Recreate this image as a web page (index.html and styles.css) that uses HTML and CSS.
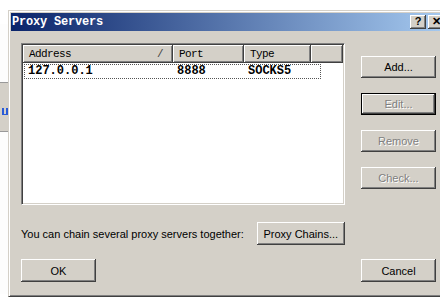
FILE: index.html
```html
<!DOCTYPE html>
<html>
<head>
<meta charset="UTF-8">
<title>Proxy Servers</title>
<link rel="stylesheet" href="styles.css">
</head>
<body>
<div class="behind">
  <div class="behind-bar"></div>
  <div class="behind-icon"></div>
</div>
<div class="dialog">
  <div class="titlebar">
    <span class="title">Proxy Servers</span>
    <span class="tbtn">?</span>
    <span class="tbtn">&#x2715;</span>
  </div>
  <div class="client">
    <div class="top">
      <div class="list">
        <div class="head">
          <span class="col c1">Address<i>/</i></span>
          <span class="col c2">Port</span>
          <span class="col c3">Type</span>
          <span class="col c4"></span>
        </div>
        <div class="row">
          <span class="c1">127.0.0.1</span>
          <span class="c2">8888</span>
          <span class="c3">SOCKS5</span>
        </div>
      </div>
      <div class="side">
        <button class="btn">Add...</button>
        <button class="btn def" disabled>Edit...</button>
        <button class="btn" disabled>Remove</button>
        <button class="btn" disabled>Check...</button>
      </div>
    </div>
    <div class="chain">
      <span>You can chain several proxy servers together:</span>
      <button class="btn wide">Proxy Chains...</button>
    </div>
    <div class="bottom">
      <button class="btn">OK</button>
      <button class="btn">Cancel</button>
    </div>
  </div>
</div>
</body>
</html>
```
FILE: styles.css
```css
*{ margin:0; padding:0; box-sizing:border-box;}
body{ width:440px; height:303px; overflow:hidden; background:#fff; position:relative; font:11px "Liberation Sans","DejaVu Sans",sans-serif; color:#000;}

/* window behind */
.behind{ position:absolute; left:0; top:24px; width:8px; height:270px; background:#fdfdfd;}
.behind-bar{ height:50px; margin-top:58px; background:#d4d0c8; border-top:1px solid #999; border-bottom:1px solid #999;}
.behind-icon{ position:absolute; left:2px; top:84px; width:6px; height:7px; border-left:2px solid #2a5bd7; border-right:2px solid #2a5bd7; border-bottom:1px solid #2a5bd7;}

/* dialog */
.dialog{ position:absolute; left:8px; top:10px; width:440px; height:287px; background:#d4d0c8;
  border-top:1px solid #d4d0c8; border-left:1px solid #d4d0c8; border-bottom:1px solid #404040;
  box-shadow:inset 1px 1px 0 #fff, inset 0 -1px 0 #808080; padding:2px 0 0 2px; display:flex; flex-direction:column;}
.titlebar{ height:18px; margin-right:2px; background:linear-gradient(to right,#0a246a,#a6caf0); display:flex; align-items:center; padding:0 2px 0 1px;}
.title{ flex:1; color:#fff; font:bold 12px "Liberation Mono","DejaVu Sans Mono",monospace; letter-spacing:-0.2px;}
.tbtn{ width:16px; height:14px; margin-left:2px; background:#d4d0c8; font:bold 11px "Liberation Sans",sans-serif; text-align:center; line-height:13px;
  box-shadow:inset -1px -1px 0 #404040, inset 1px 1px 0 #fff, inset -2px -2px 0 #808080;}

.client{ padding:12px 0 0 10px; flex:1; display:flex; flex-direction:column;}
.top{ display:flex;}
.list{ width:324px; height:162px; background:#fff; border-top:1px solid #808080; border-left:1px solid #808080; border-right:1px solid #fff; border-bottom:1px solid #fff;
  box-shadow:inset 1px 1px 0 #404040, inset -1px -1px 0 #d4d0c8; padding:1px;}
.head{ display:flex; height:18px; font:11px "Liberation Mono","DejaVu Sans Mono",monospace; letter-spacing:-0.6px;}
.col{ background:#d4d0c8; box-shadow:inset -1px -1px 0 #404040, inset 1px 1px 0 #fff, inset -2px -2px 0 #808080; padding:3px 0 0 6px; position:relative;}
.col i{ font-style:normal; position:absolute; right:10px; top:3px; color:#444;}
.c1{ width:150px;}
.c2{ width:71px;}
.c3{ width:67px;}
.c4{ flex:1;}
.row{ display:flex; height:15px; margin:1px 22px 0 1px; outline:1px dotted #555; outline-offset:-1px; font:bold 12px "Liberation Mono","DejaVu Sans Mono",monospace; line-height:14px;}
.row span{ padding-left:4px;}
.row .c1{ width:149px;}

.side{ display:flex; flex-direction:column; margin-left:16px; padding-top:13px; gap:15px;}
.btn{ width:75px; height:23px; background:#d4d0c8; border:0; font:11px "Liberation Sans","DejaVu Sans",sans-serif; color:#000;
  box-shadow:inset -1px -1px 0 #404040, inset 1px 1px 0 #fff, inset -2px -2px 0 #808080;}
.btn:disabled{ color:#808080; text-shadow:1px 1px 0 #fff;}
.btn.def{ box-shadow:inset 0 0 0 1px #000, inset -2px -2px 0 #404040, inset 2px 2px 0 #fff, inset -3px -3px 0 #808080;}
.side .btn{ height:22px;}

.chain{ display:flex; align-items:center; margin-top:17px; gap:13px;}
.btn.wide{ width:88px;}
.bottom{ display:flex; justify-content:space-between; margin-top:14px; width:415px;}
```
